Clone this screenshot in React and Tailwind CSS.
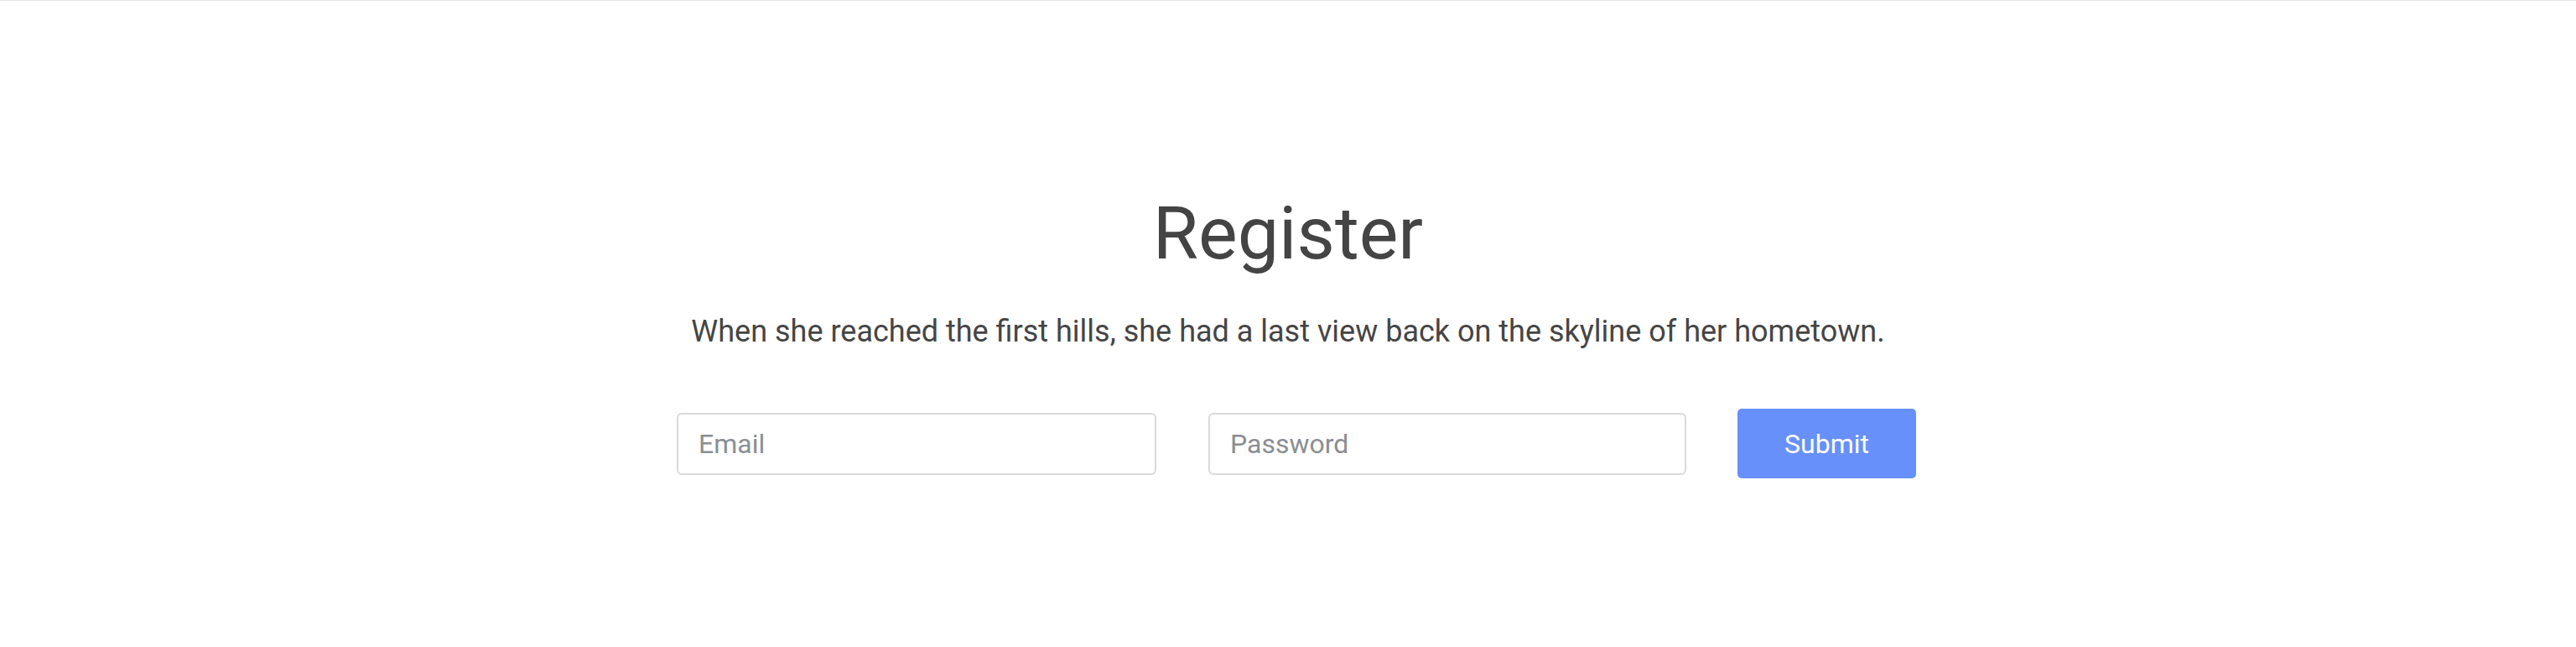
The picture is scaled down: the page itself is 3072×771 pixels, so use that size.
import React, { useState } from 'react'

const font = { fontFamily: 'Roboto, "Noto Sans", sans-serif' }

const App = () => {
  const [email, setEmail] = useState('')
  const [password, setPassword] = useState('')

  const handleSubmit = (e) => {
    e.preventDefault()
  }

  return (
    <div className="min-h-[771px] w-full bg-white border-t border-[#e6e6e6]" style={font}>
      <div className="flex flex-col items-center pt-[233px]">
        <h1 className="text-[88px] leading-none font-normal text-[#444444]">Register</h1>
        <p className="mt-[55px] text-[36px] leading-none text-[#454545]">
          When she reached the first hills, she had a last view back on the skyline of her hometown.
        </p>

        {/* Form */}
        <form onSubmit={handleSubmit} className="mt-[74px] flex items-center pl-[20px]">
          <input
            type="email"
            value={email}
            onChange={(e) => setEmail(e.target.value)}
            placeholder="Email"
            className="h-[74px] w-[572px] rounded-[6px] border-2 border-[#dadada] bg-white px-[24px] text-[32px] text-[#444444] placeholder:text-[#8b8e92] outline-none"
          />
          <input
            type="password"
            value={password}
            onChange={(e) => setPassword(e.target.value)}
            placeholder="Password"
            className="ml-[62px] h-[74px] w-[570px] rounded-[6px] border-2 border-[#dadada] bg-white px-[24px] text-[32px] text-[#444444] placeholder:text-[#8b8e92] outline-none"
          />
          <button
            type="submit"
            className="ml-[61px] h-[83px] w-[213px] rounded-[5px] bg-[#6890fa] text-[32px] text-white"
          >
            Submit
          </button>
        </form>
      </div>
    </div>
  )
}

export default App
